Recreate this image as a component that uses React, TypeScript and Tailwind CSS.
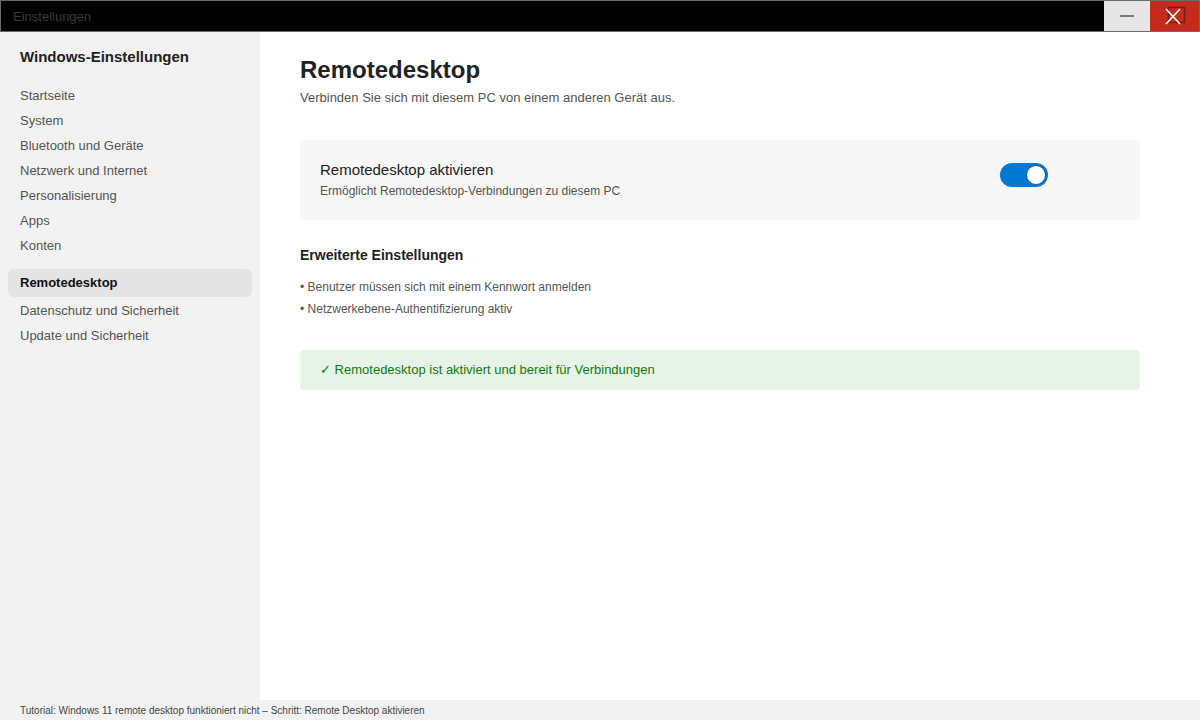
const navItems = [
  'Startseite',
  'System',
  'Bluetooth und Geräte',
  'Netzwerk und Internet',
  'Personalisierung',
  'Apps',
  'Konten',
];

const navAfter = ['Datenschutz und Sicherheit', 'Update und Sicherheit'];

export default function App() {
  return (
    <div
      className="w-[1200px] h-[720px] flex flex-col bg-white overflow-hidden"
      style={{ fontFamily: '"Liberation Sans", Arial, sans-serif' }}
    >
      {/* Title bar */}
      <div className="h-8 flex items-stretch bg-black border border-[#6b6b6b] shrink-0">
        <div className="flex-1 flex items-center pl-3 pt-[2px] text-[13px] text-[#3a3a3a]">Einstellungen</div>
        <div className="w-[46px] bg-[#e6e6e6] flex items-center justify-center">
          <div className="w-[14px] h-[2px] bg-[#7a7a7a]" />
        </div>
        <div className="w-[49px] bg-[#c42b1c] flex items-center justify-center">
          <svg width="22" height="20" viewBox="0 0 22 20">
            <rect x="4.5" y="1.5" width="16" height="15" fill="none" stroke="#7a1a12" strokeWidth="1.5" />
            <path d="M2 3 L16 18 M16 3 L2 18" stroke="#ffffff" strokeWidth="1.6" />
          </svg>
        </div>
      </div>

      <div className="flex-1 flex min-h-0">
        {/* Sidebar */}
        <div className="w-[260px] bg-[#f2f2f2] flex flex-col px-2 pt-4">
          <div className="px-3 h-[18px] flex items-center text-[15px] font-bold text-[#222] mb-[17px]">
            Windows-Einstellungen
          </div>
          {navItems.map((item) => (
            <div key={item} className="px-3 h-[25px] flex items-center text-[13px] text-[#555]">
              {item}
            </div>
          ))}
          <div className="mt-[11px] h-[28px] px-3 flex items-center rounded-md bg-[#e4e4e4] text-[13px] font-bold text-[#111]">
            Remotedesktop
          </div>
          <div className="mt-[1px]">
            {navAfter.map((item) => (
              <div key={item} className="px-3 h-[25px] flex items-center text-[13px] text-[#555]">
                {item}
              </div>
            ))}
          </div>
        </div>

        {/* Main */}
        <div className="flex-1 pl-10 pr-[60px] pt-[22px]">
          <h1 className="text-[24px] font-bold text-[#222] leading-[30px] mt-[1px]">Remotedesktop</h1>
          <p className="text-[13px] text-[#555] mt-[5px] leading-[16px]">
            Verbinden Sie sich mit diesem PC von einem anderen Gerät aus.
          </p>

          <div className="mt-[34px] h-20 bg-[#f7f7f7] rounded-lg flex items-center pl-5 pr-[92px]">
            <div className="flex-1">
              <div className="text-[15px] text-[#222] leading-[18px]">Remotedesktop aktivieren</div>
              <div className="text-[12px] text-[#555] leading-[15px] mt-[5px]">
                Ermöglicht Remotedesktop-Verbindungen zu diesem PC
              </div>
            </div>
            <div className="self-start mt-[23px] w-12 h-6 rounded-full bg-[#0078d4] flex items-center justify-end pr-[2px]">
              <div className="w-5 h-5 rounded-full bg-white border border-[#0a5aa0]" />
            </div>
          </div>

          <h2 className="mt-[27px] text-[14px] font-bold text-[#222] leading-[17px]">Erweiterte Einstellungen</h2>
          <ul className="mt-[12px] text-[12px] text-[#555]">
            <li className="h-[22px] flex items-center">• Benutzer müssen sich mit einem Kennwort anmelden</li>
            <li className="h-[22px] flex items-center">• Netzwerkebene-Authentifizierung aktiv</li>
          </ul>

          <div className="mt-[30px] h-10 rounded bg-[#e6f3e6] flex items-center px-5 text-[13px] text-[#107c10]">
            ✓ Remotedesktop ist aktiviert und bereit für Verbindungen
          </div>
        </div>
      </div>

      {/* Footer */}
      <div className="h-5 shrink-0 bg-[#f2f2f2] flex items-center px-5 text-[10px] text-[#444]">
        Tutorial: Windows 11 remote desktop funktioniert nicht – Schritt: Remote Desktop aktivieren
      </div>
    </div>
  );
}
